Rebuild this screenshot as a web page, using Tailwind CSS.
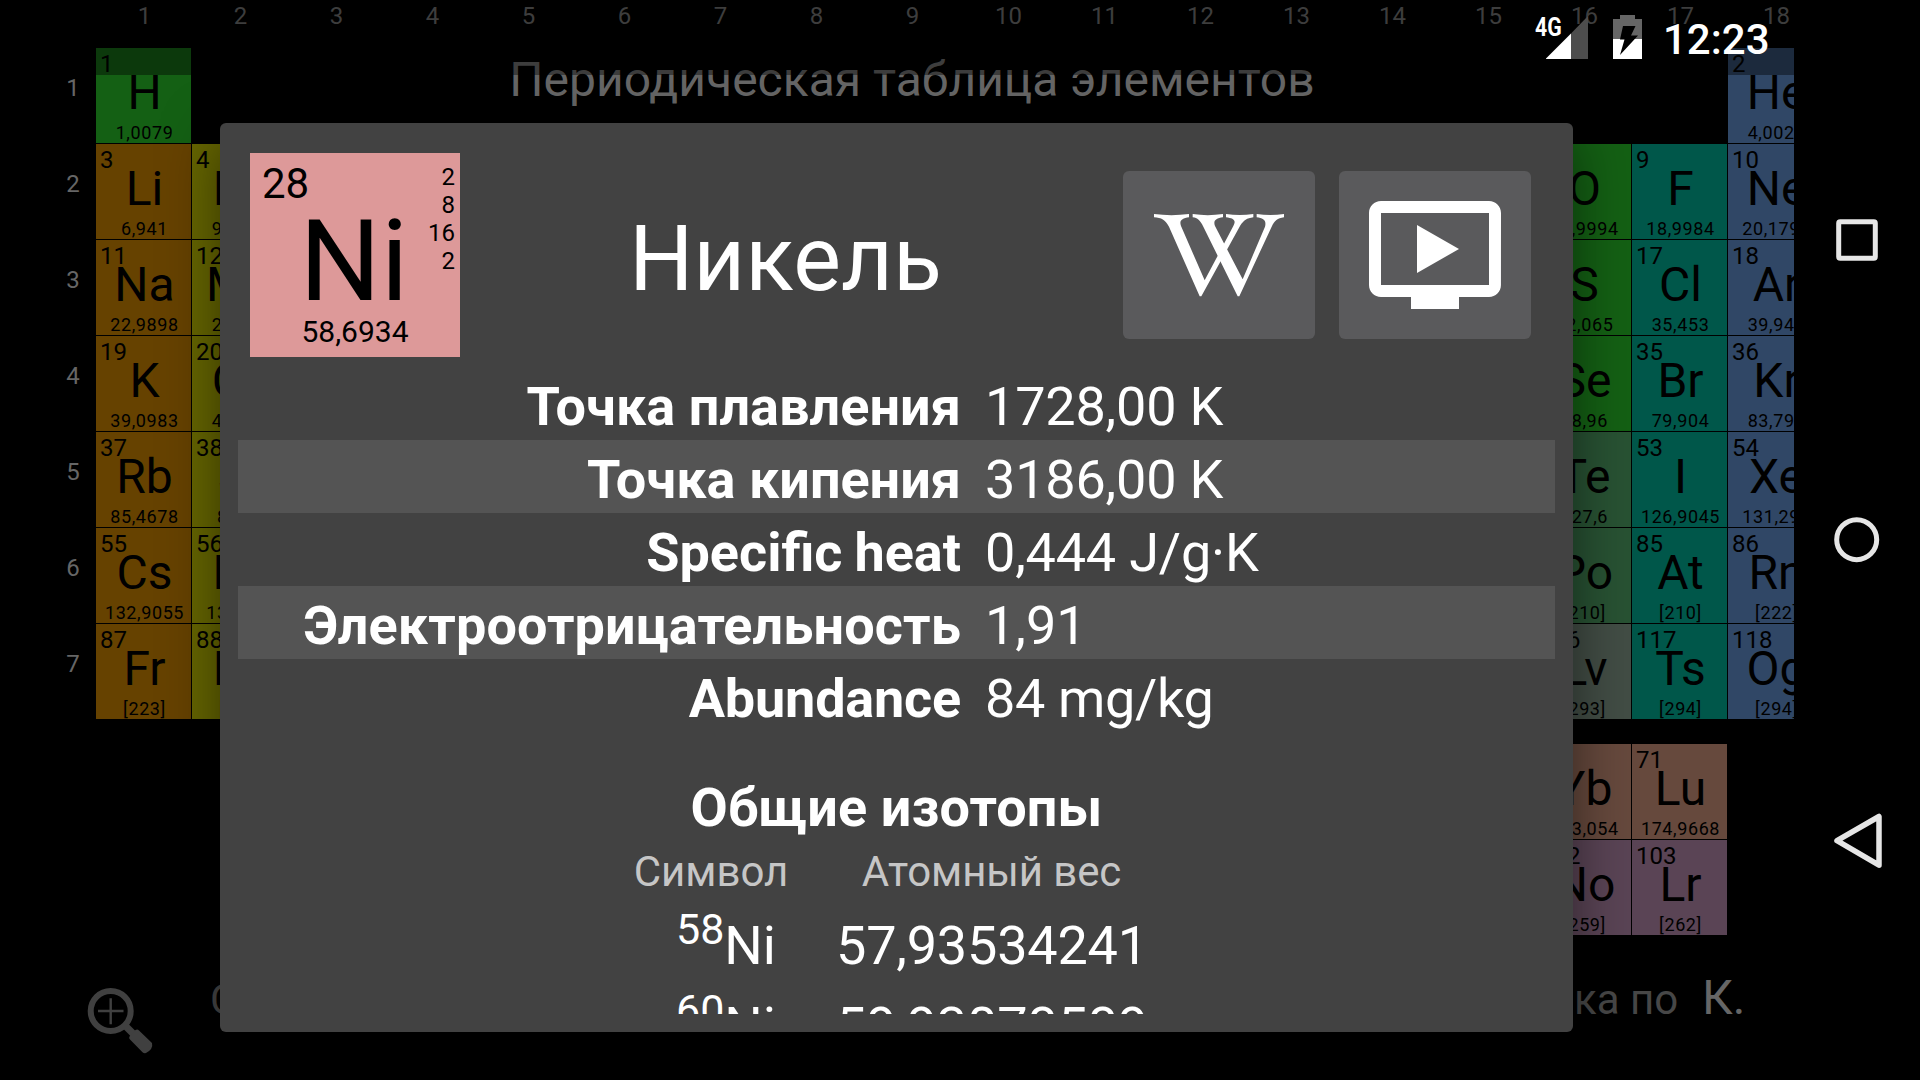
<!DOCTYPE html>
<html lang="ru">
<head>
<meta charset="utf-8">
<title>Периодическая таблица элементов</title>
<script src="https://cdn.jsdelivr.net/npm/@tailwindcss/browser@4"></script>
</head>
<body class="bg-black">
<div class="relative flex h-[1080px] w-[1920px] overflow-hidden bg-black font-[Roboto,sans-serif]">

  <!-- Periodic table behind the dialog -->
  <main class="h-full w-[1794px] shrink-0 overflow-hidden">
    <div id="table" class="grid w-[1824px] grid-cols-[repeat(19,96px)] grid-rows-[48px_repeat(7,96px)_24px_96px_96px]">
      <h1 class="col-start-4 col-end-17 row-start-2 text-center text-[48px] leading-[63px] whitespace-nowrap text-[#666666]">Периодическая таблица элементов</h1>
    </div>
    <footer class="flex h-[144px] items-start text-[42px] leading-[56px] text-[#474747]">
      <svg class="mt-[50px] ml-[84px] h-[70px] w-[70px] shrink-0" viewBox="0 0 70 70" fill="none" stroke="#404040">
        <circle cx="26.7" cy="25" r="20" stroke-width="6"/>
        <path d="M26.7 12.3v26M14 25h25.5" stroke-width="2.4"/>
        <path d="M40 38.500l9 9" stroke-width="7"/>
        <path d="M46 49.500l5.500-5.500q2-1 3.500.5L68 57q1.500 6-6 10-2 .5-3.500-.8L46 53.500q-1.500-2 0-4z" fill="#404040" stroke="none"/>
      </svg>
      <span class="mt-[36px] ml-[56px] w-[1364px]">С</span>
      <span class="mt-[36px] w-[128px] whitespace-nowrap">ка по</span>
      <span class="mt-[34px] text-[48px] text-[#666666]">К.</span>
    </footer>
  </main>

  <!-- Navigation bar -->
  <nav class="flex h-full w-[126px] flex-col items-center bg-black">
    <svg class="mt-[212px] h-[56px] w-[56px]" viewBox="0 0 56 56" fill="none" stroke="#e6e6e6"><rect x="9.700" y="9.700" width="36.600" height="36.600" rx="1.500" stroke-width="5"/></svg>
    <svg class="mt-[244px] h-[56px] w-[56px]" viewBox="0 0 56 56" fill="none" stroke="#e6e6e6"><circle cx="27.700" cy="27.700" r="20" stroke-width="5"/></svg>
    <svg class="mt-[245px] h-[56px] w-[56px]" viewBox="0 0 56 56" fill="none" stroke="#e6e6e6"><path d="M8 27.700L50 3.500V52.200Z" stroke-width="5.500" stroke-linejoin="round"/></svg>
  </nav>

  <!-- Status bar -->
  <header class="absolute top-0 left-0 flex h-[75px] w-[1794px] items-start bg-black/40 text-white">
    <span class="mt-[12px] ml-[1534.500px] w-[11.500px] origin-left scale-x-[.85] text-[25px] leading-[31px] font-bold">4G</span>
    <svg class="mt-[15px] h-[44px] w-[43px]" viewBox="0 0 43 44"><path d="M42 1V44H25V18.500Z" fill="#4d4d4d"/><path d="M-.5 44L25 18.500V44Z" fill="#fff"/></svg>
    <svg class="mt-[15px] ml-[24px] h-[44px] w-[29px]" viewBox="0 0 29 44"><path d="M7 0h15v4h7v20H0V4h7z" fill="#666"/><path d="M0 24h29v20H0z" fill="#fff"/><path d="M10 11h12.500l-4.500 9.500h7L7 40l4.500-15.500H7z" fill="#000"/></svg>
    <span class="mt-[15px] ml-[21px] text-[42px] leading-[49px] font-medium">12:23</span>
  </header>

  <!-- Element dialog -->
  <section class="absolute top-[123px] left-[220px] flex h-[909px] w-[1353px] flex-col rounded-[6px] bg-[#424242] px-[18px] pb-[18px] text-white shadow-[0_14px_56px_rgba(0,0,0,0.5)]">
    <div class="flex h-[244px] shrink-0 items-start pt-[30px] pl-[12px]">
      <div class="flex h-[204px] w-[210px] justify-between bg-[#dd9999] text-black">
        <div class="w-[50px] pt-[6px] pl-[12px] text-[42px] leading-[49px]">28</div>
        <div class="flex w-[110px] flex-col items-center pt-[60px]">
          <div class="-ml-[2px] text-[114px] leading-[96px]">Ni</div>
          <div class="mt-[5px] text-[30px] leading-[36px]">58,6934</div>
        </div>
        <div class="w-[50px] pt-[10px] pr-[5px] text-right text-[24px] leading-[28px]">2<br>8<br>16<br>2</div>
      </div>
      <h2 class="w-[651px] pt-[54px] text-center text-[90px] leading-[106px]">Никель</h2>
      <div class="mt-[18px] ml-[12px] flex gap-[24px]">
        <button class="flex h-[168px] w-[192px] items-center justify-center rounded-[6px] bg-[#5a5a5c]">
          <svg class="h-[84px] w-[130px]" viewBox="162 309 390 252" fill="#fff">
            <path d="M162 312Q214 319 267 312V322C246 325 237 332 243 348L314 511L357 430L400 348C410 330 400 325 378 322V312Q419 318 460 312V322C440 325 432 330 420 348L304 559H299L207 350C195 330 185 323 162 322Z"/>
            <path d="M278 312Q323 319 369 312V322C347 325 339 332 345 348L428 508L495 350C500 330 490 325 470 322V312Q511 318 552 312V322C532 325 524 332 515 350L418 559H413L310 350C300 330 293 324 278 322Z"/>
          </svg>
        </button>
        <button class="flex h-[168px] w-[192px] items-center justify-center rounded-[6px] bg-[#5a5a5c]">
          <svg class="h-[144px] w-[144px]" viewBox="0 0 24 24" fill="#fff"><path d="M21 3H3c-1.110 0-2 .89-2 2v12c0 1.100.89 2 2 2h5v2h8v-2h5c1.100 0 1.990-.9 1.990-2L23 5c0-1.110-.9-2-2-2zm0 14H3V5h18v12zm-5-6l-7 4V7z"/></svg>
        </button>
      </div>
    </div>
    <div class="min-h-0 flex-1 overflow-hidden">
      <div class="text-[54px] leading-[79px] whitespace-nowrap">
        <div class="flex h-[73px] gap-[24px]"><b class="w-[723px] text-right tracking-[0.05px]">Точка плавления</b><span class="tracking-[-0.2px]">1728,00 K</span></div>
        <div class="flex h-[73px] gap-[24px] bg-[#545454]"><b class="w-[723px] text-right">Точка кипения</b><span class="tracking-[-0.2px]">3186,00 K</span></div>
        <div class="flex h-[73px] gap-[24px]"><b class="w-[723px] text-right [word-spacing:-1.5px]">Specific heat</b><span class="tracking-[-0.2px]">0,444 J/g·K</span></div>
        <div class="flex h-[73px] gap-[24px] bg-[#545454]"><b class="w-[723px] text-right tracking-[0.12px]">Электроотрицательность</b><span>1,91</span></div>
        <div class="flex h-[73px] gap-[24px]"><b class="w-[723px] text-right tracking-[-0.2px]">Abundance</b><span class="tracking-[-0.35px]">84 mg/kg</span></div>
      </div>
      <h3 class="mt-[40px] text-center text-[54px] leading-[72px] font-bold tracking-[0.15px]">Общие изотопы</h3>
      <div class="mt-[3px] flex text-[42px] leading-[50px] text-[#c6c6c6]"><span class="ml-[395px] w-[156px] text-center whitespace-nowrap">Символ</span><span class="ml-[64px] w-[277px] text-center tracking-[-0.1px] whitespace-nowrap">Атомный вес</span></div>
      <div class="mt-[3px] flex h-[81px] text-[54px] leading-[91px]"><span class="flex w-[538px] justify-end"><span class="relative -top-[16px] text-[43px]">58</span>Ni</span><span class="ml-[60px] tracking-[-0.2px]">57,93534241</span></div>
      <div class="flex h-[81px] text-[54px] leading-[91px]"><span class="flex w-[538px] justify-end"><span class="relative -top-[16px] text-[43px]">60</span>Ni</span><span class="ml-[60px] tracking-[-0.2px]">59,93078589</span></div>
    </div>
  </section>
</div>

<script>
  const col = {
    alkali: 'bg-[#664200]', earth: 'bg-[#666600]', nonmetal: 'bg-[#146014]', metalloid: 'bg-[#285233]',
    post: 'bg-[#424d45]', halogen: 'bg-[#00574a]', noble: 'bg-[#304766]', lan: 'bg-[#66493d]', act: 'bg-[#5a4455]'
  };
  // [column, row, number, symbol, weight, group]
  const elements = [
    [1,1,1,'H','1,0079','nonmetal'],[18,1,2,'He','4,0026','noble'],
    [1,2,3,'Li','6,941','alkali'],[2,2,4,'Be','9,0122','earth'],[16,2,8,'O','15,9994','nonmetal'],[17,2,9,'F','18,9984','halogen'],[18,2,10,'Ne','20,1797','noble'],
    [1,3,11,'Na','22,9898','alkali'],[2,3,12,'Mg','24,305','earth'],[16,3,16,'S','32,065','nonmetal'],[17,3,17,'Cl','35,453','halogen'],[18,3,18,'Ar','39,948','noble'],
    [1,4,19,'K','39,0983','alkali'],[2,4,20,'Ca','40,078','earth'],[16,4,34,'Se','78,96','nonmetal'],[17,4,35,'Br','79,904','halogen'],[18,4,36,'Kr','83,798','noble'],
    [1,5,37,'Rb','85,4678','alkali'],[2,5,38,'Sr','87,62','earth'],[16,5,52,'Te','127,6','metalloid'],[17,5,53,'I','126,9045','halogen'],[18,5,54,'Xe','131,293','noble'],
    [1,6,55,'Cs','132,9055','alkali'],[2,6,56,'Ba','137,327','earth'],[16,6,84,'Po','[210]','metalloid'],[17,6,85,'At','[210]','halogen'],[18,6,86,'Rn','[222]','noble'],
    [1,7,87,'Fr','[223]','alkali'],[2,7,88,'Ra','[226]','earth'],[16,7,116,'Lv','[293]','post'],[17,7,117,'Ts','[294]','halogen'],[18,7,118,'Og','[294]','noble'],
    [16,9,70,'Yb','173,054','lan'],[17,9,71,'Lu','174,9668','lan'],
    [16,10,102,'No','[259]','act'],[17,10,103,'Lr','[262]','act']
  ];
  let html = '';
  for (let c = 1; c <= 18; c++)
    html += `<div class="pl-[1px] text-center text-[24px] leading-[32px] text-[#666666]" style="grid-column:${c + 1};grid-row:1">${c}</div>`;
  for (let r = 1; r <= 7; r++)
    html += `<div class="pl-[50px] pt-[22px] text-center text-[24px] leading-[36px] text-[#666666]" style="grid-column:1;grid-row:${r + 1}">${r}</div>`;
  for (const [c, r, n, s, w, g] of elements)
    html += `<div class="flex h-[95px] w-[95px] flex-col overflow-hidden text-black ${col[g]}" style="grid-column:${c + 1};grid-row:${r + 1}">
      <div class="pl-[4px] text-[24px] leading-[32px]">${n}</div>
      <div class="w-[97px] text-center text-[48px] leading-[25px]">${s}</div>
      <div class="mt-[20px] w-[97px] text-center text-[18px] leading-[16px] tracking-[0.6px] whitespace-nowrap">${w}</div></div>`;
  document.getElementById('table').insertAdjacentHTML('beforeend', html);
</script>
</body>
</html>
